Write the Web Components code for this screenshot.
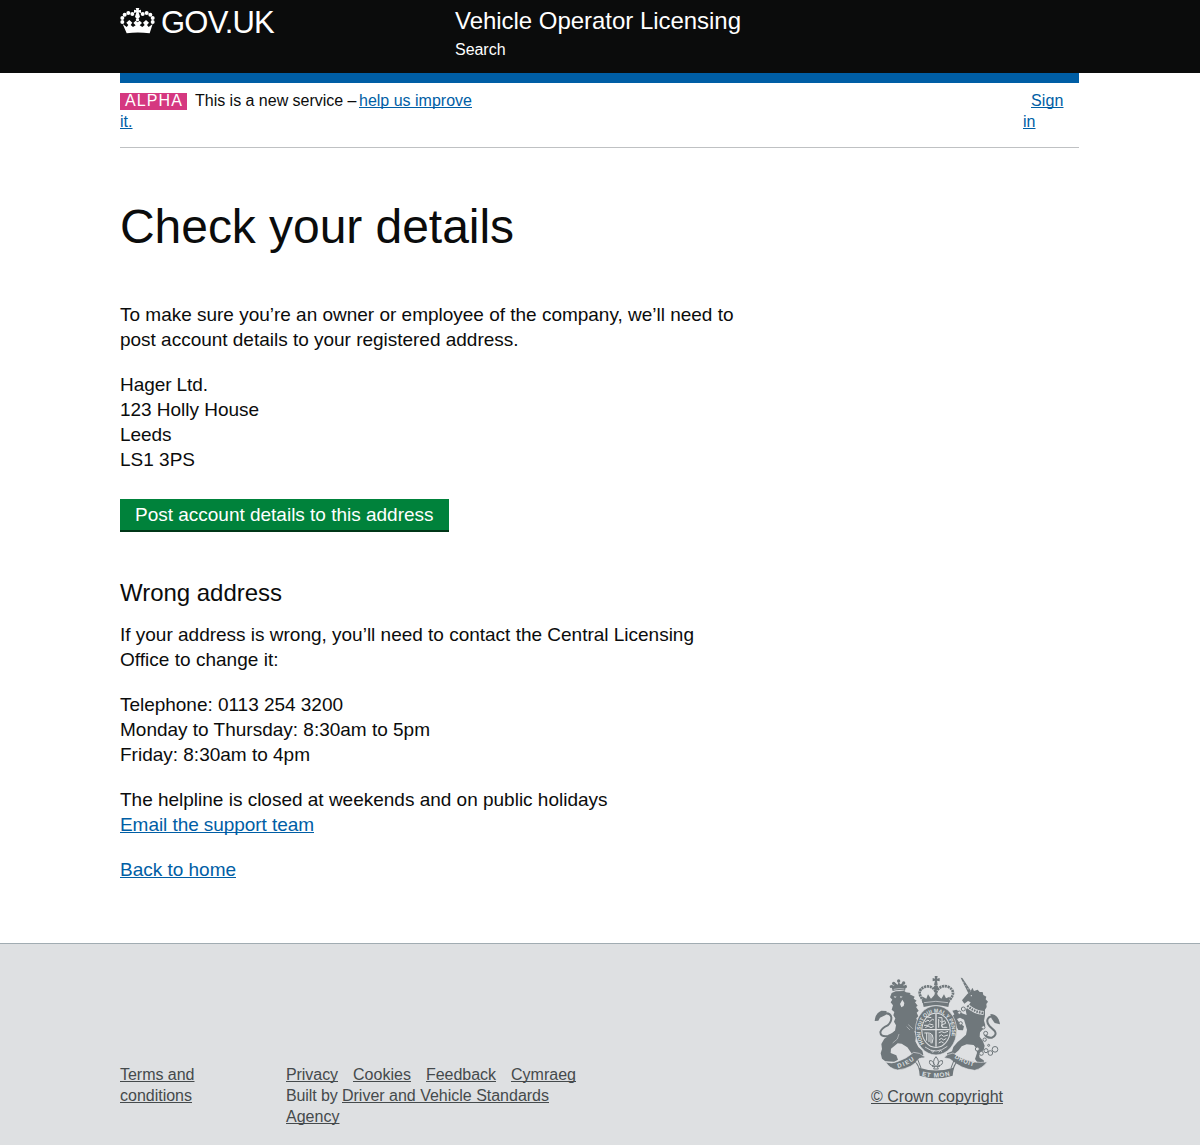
<!DOCTYPE html>
<html lang="en"><head><meta charset="utf-8"><title>Check your details</title>
<style>
html,body{margin:0;background:#fff}
body{font-family:"Liberation Sans",Arial,sans-serif;color:#0b0c0c;height:1145px;overflow:hidden}
</style></head><body>
<licensing-page></licensing-page>
<script>
const define=(name,html,ready)=>customElements.define(name,class extends HTMLElement{
  constructor(){super();this.attachShadow({mode:'open'}).innerHTML=html}
  connectedCallback(){if(ready)ready.call(this)}
});

/* One line of type, tracked so that it sets to the measure given in "w". */
define('type-line','<style>:host{display:block;white-space:pre;height:var(--lh,25px);line-height:var(--lh,25px)}span{display:inline-block}:host([link]) span{text-decoration:underline;text-decoration-thickness:1px;text-underline-offset:1px;text-decoration-skip-ink:none}:host([link]){color:var(--link,#005ea5)}</style><span><slot></slot></span>',function(){
  const s=this.shadowRoot.querySelector('span'),w=+this.getAttribute('w');
  if(!w)return;
  const n=this.textContent.length,d=w-s.getBoundingClientRect().width;
  s.style.letterSpacing=(d/n)+'px';
});

define('crown-mark',`<style>:host{display:block;width:35px;height:27px}svg{display:block}</style>
<svg width="35" height="27" viewBox="0 0 105 81" fill="#fff">
<path d="M47 0h11l-2 7 7-2v10l-7-2 2 9H47l2-9-7 2V5l7 2z"/>
<circle cx="52.500" cy="25" r="7"/><circle cx="52.500" cy="35" r="5"/>
<g><circle cx="37" cy="18" r="6"/><circle cx="25" cy="15" r="6"/><circle cx="14" cy="20" r="6"/><circle cx="7" cy="30" r="6"/><circle cx="7" cy="42" r="6"/><circle cx="68" cy="18" r="6"/><circle cx="80" cy="15" r="6"/><circle cx="91" cy="20" r="6"/><circle cx="98" cy="30" r="6"/><circle cx="98" cy="42" r="6"/></g>
<path d="M8 48l12 9 5-6-6-7 9-8 9 8-5 7 7 6 8-5-7-7 7-7 6 5 6-5 7 7-7 7 8 5 7-6-5-7 9-8 9 8-6 7 5 6 12-9-9 28q-36-5-69 0z"/></svg>`);

define('site-header',`<style>
:host{display:block;background:#0b0c0c;color:#fff;height:73px}
.in{width:960px;margin:0 auto;display:flex}
.brand{width:335px;display:flex;gap:6px;padding-top:8px;box-sizing:border-box}
.brand type-line{font-size:31px;--lh:30px}
.svc{padding-top:6px}
.svc .name{font-size:24px;--lh:30px}.svc .nav{font-size:16px;--lh:20px;margin-top:4px}
</style><div class="in"><div class="brand"><crown-mark></crown-mark><type-line w="113">GOV.UK</type-line></div>
<div class="svc"><type-line class="name" w="286">Vehicle Operator Licensing</type-line><type-line class="nav" w="50.500">Search</type-line></div></div>`);

define('phase-banner',`<style>
:host{display:flex;justify-content:space-between;border-top:10px solid #005ea5;border-bottom:1px solid #bfc1c3;height:64px;font-size:16px;--lh:21px}
.l,.r{padding-top:7px}.row{display:flex}.r{width:56px}.r .a{margin-left:8px}
.tag{background:#d53880;color:#fff;width:62px;height:17px;margin:3px 8px 0 0;padding-left:5px;--lh:16px}
.help{margin-left:2.500px}
</style><div class="l"><div class="row"><div class="tag"><type-line w="58">ALPHA</type-line></div><type-line w="161.500">This is a new service –</type-line><type-line class="help" link w="113">help us improve</type-line></div><type-line link w="12.500">it.</type-line></div>
<div class="r"><type-line class="a" link w="32.500">Sign</type-line><type-line link w="12.500">in</type-line></div>`);

define('green-button',`<style>:host{display:block}button{display:block;font:inherit;font-size:19px;border:0;border-bottom:2px solid #003618;background:#00823b;color:#fff;width:329px;height:33px;padding:0 15px 1px;text-align:left;--lh:25px}</style><button><type-line></type-line></button>`,function(){
  const t=this.shadowRoot.querySelector('type-line');t.textContent=this.textContent;
  const s=t.shadowRoot.querySelector('span');
  s.style.letterSpacing=((298.5-s.getBoundingClientRect().width)/t.textContent.length)+'px';
});

define('details-content',`<style>
:host{display:block;font-size:19px;--lh:25px}
section{margin-top:20px}
.h1{font-size:48px;--lh:50px;padding-top:54px;height:50px}
.first{margin-top:50px}green-button{margin-top:27px}.h2{font-size:24px;--lh:30px;margin-top:46px}
.after{margin-top:14px}
</style>
<type-line class="h1" w="394">Check your details</type-line>
<section class="first"><type-line w="613.500">To make sure you’re an owner or employee of the company, we’ll need to</type-line><type-line w="398.500">post account details to your registered address.</type-line></section>
<section><type-line w="88">Hager Ltd.</type-line><type-line w="139">123 Holly House</type-line><type-line w="51.500">Leeds</type-line><type-line w="75">LS1 3PS</type-line></section>
<green-button>Post account details to this address</green-button>
<type-line class="h2" w="162">Wrong address</type-line>
<section class="after"><type-line w="574">If your address is wrong, you’ll need to contact the Central Licensing</type-line><type-line w="158.500">Office to change it:</type-line></section>
<section><type-line w="223">Telephone: 0113 254 3200</type-line><type-line w="310">Monday to Thursday: 8:30am to 5pm</type-line><type-line w="190">Friday: 8:30am to 4pm</type-line></section>
<section><type-line w="487.500">The helpline is closed at weekends and on public holidays</type-line><type-line link w="194">Email the support team</type-line></section>
<section><type-line link w="116">Back to home</type-line></section>`);

define('royal-arms',`<style>:host{display:block;width:145px;height:120px}svg{display:block}text{font:bold 18px "Liberation Sans",sans-serif;fill:#dee0e2}</style>
<svg width="145" height="120" viewBox="0 0 435 360" fill="#6f777b">
<defs><path id="sc-l" d="M99 309Q130 301 156 279"/><path id="sc-m" d="M170 332Q213 344 262 330"/><path id="sc-r" d="M268 278Q295 297 334 306"/><path id="gart" d="M177 236A47 57 0 1 1 250 236"/></defs>
<!-- lion -->
<path d="M83 78l-5-19 9 3 3-9 8 6 3-8 5 7 8-5 2 9 8-3-4 18q-19-4-37 1z"/><circle cx="101" cy="48" r="5"/><circle cx="86" cy="55" r="5"/><circle cx="116" cy="54" r="5"/><circle cx="78" cy="65" r="4"/><circle cx="122" cy="65" r="4"/>
<path d="M86 73q15-4 32-1" stroke="#dee0e2" stroke-width="2" fill="none"/>
<path d="M80 84L92 79 118 78 123 82 137 84 134 88 149 95 146 101 155 107 150 112 158 122 153 126 161 137 155 143 160 154 154 160 158 172 168 181 175 184 170 202 159 198 148 199 153 212 151 229 160 246 172 257 175 269 166 275 144 275 139 264 127 247 110 236 98 235 78 251 77 264 94 271 99 284 88 290 61 289 51 281 47 265 51 252 49 237 58 221 76 209 90 197 93 181 87 170 91 160 85 151 88 141 80 134 84 121 77 112 82 104 75 97z"/>
<path d="M94 198q-12 12-25 15-23 4-23-12 4-12 22-20 12-9 11-24-3-15-23-11" fill="none" stroke="#6f777b" stroke-width="6"/><path d="M29 168q2-24 20-31l16 1-3 12-17 8-5 9z"/>
<path d="M86 94l9 1-5 4zM105 94l8 1-6 4zM112 104l6 10-2 9-7 4-4-10z" fill="#dee0e2"/>
<path d="M130 179l13 12M125 185l10 10M102 207l-5 15-14 12" fill="none" stroke="#dee0e2" stroke-width="1.500"/>
<!-- unicorn -->
<path d="M287 38l5 1 26 39-8 7z"/><path d="M293 51l5 2M300 61l5 2M306 71l6 1" stroke="#dee0e2" stroke-width="1.500"/>
<path d="M307 87L317 79 322 68 327 78 338 74 344 81 353 81 355 90 364 95 362 103 369 110 364 117 365 126 360 134 360 151 357 167 361 181 354 193 345 202 344 215 353 227 359 242 356 255 342 266 344 278 356 286 359 297 340 297 330 282 336 264 334 250 326 240 305 238 290 244 281 256 269 266 262 275 247 276 246 265 261 259 265 246 278 231 289 222 303 209 306 194 301 177 297 164 285 158 276 162 284 175 297 184 294 196 280 195 275 186 263 168 257 158 268 148 262 137 274 134 289 144 305 150 302 136 309 124 317 112 309 108 298 116 291 106z"/>
<path d="M359 208q8 12 22 10 16-8 8-20l-15-14q-13-15-3-26 11-8 22 3" fill="none" stroke="#6f777b" stroke-width="6"/><path d="M376 147q24 0 29 31l-16-4-9-13z"/>
<circle cx="319" cy="92" r="2" fill="#dee0e2"/>
<path d="M307 122q22 20 49 22" stroke="#dee0e2" stroke-width="12" fill="none"/><path d="M307 122q22 20 49 22" stroke="#6f777b" stroke-width="7" fill="none" stroke-dasharray="5 3"/>
<g fill="#dee0e2" stroke="#6f777b" stroke-width="3"><circle cx="295" cy="132" r="6"/><circle cx="283" cy="143" r="5"/><circle cx="287" cy="175" r="5"/><circle cx="355" cy="187" r="5"/><circle cx="362" cy="205" r="6"/><circle cx="359" cy="224" r="5"/><circle cx="337" cy="252" r="6"/><circle cx="349" cy="265" r="6"/><circle cx="363" cy="257" r="6"/><circle cx="376" cy="264" r="7"/><circle cx="390" cy="253" r="8.500"/><circle cx="371" cy="241" r="3"/></g>
<!-- central crown -->
<path d="M209 33h9l-2 8 8-2v10l-8-2 2 12-5 3-6-3 3-12-7 2V39l7 2z"/><circle cx="213" cy="68" r="7"/>
<path d="M177 108q-28-31 4-43 19-4 29 12l3 5 4-7q13-16 32-10 29 15 2 43" fill="none" stroke="#6f777b" stroke-width="8" stroke-dasharray="6.500 2"/><path d="M213 70v31" stroke="#6f777b" stroke-width="8" stroke-dasharray="6 1.500"/>
<path d="M171 113l2-18 11 6 5-13 9 13 7-7 8-10 8 10 8 7 8-13 6 12 11-5-1 18z"/><path d="M172 108q41-10 82 0l-4 18q-37-11-74 0z"/>
<path d="M177 113q35-8 72 0" fill="none" stroke="#dee0e2" stroke-width="2"/>
<!-- garter and shield -->
<ellipse cx="213" cy="196" rx="62" ry="74" stroke="#dee0e2" stroke-width="2"/><ellipse cx="213" cy="196" rx="44" ry="53" fill="#dee0e2"/><ellipse cx="213" cy="196" rx="41" ry="50"/>
<path d="M213 146v99M172 194h82" stroke="#dee0e2" stroke-width="4"/>
<g stroke="#dee0e2" stroke-width="3" fill="none"><path d="M180 171l9-6 5 5 8-7 5 2M177 181h12l5-4 11 3M181 188l8-5 9 5 8-4M187 156l12 2M220 158h11v29h16M221 188v-26M225 167l5 5 9-5 3 8-13 5 3 6M178 204q19-2 24 6t-1 25M185 204v23M192 206v25M198 208v27M221 203l9-3 8 3 11-4M222 214l7-5 7 5 13-4M222 225l7-5 7 5 8-5M221 234l8-4 7 4"/></g>
<text style="font-size:17px"><textPath href="#gart" textLength="215" lengthAdjust="spacingAndGlyphs">HONI SOIT QUI MAL Y PENSE</textPath></text>
<path d="M180 246q33 25 67-2M199 256l4 6 6-5M221 262l5-6 5 4" stroke="#dee0e2" stroke-width="2.500" fill="none"/>
<!-- motto ribbon -->
<g stroke="#dee0e2" stroke-width="2"><path d="M62 291q19 6 34-1 28-8 50-28 19 0 32 13l-17 6q-16 28-63 34-25-4-36-24z"/><path d="M367 290q-19 5-42 0-36-7-61-26-17 2-27 14l18 4q33 30 74 34 24-6 38-26z"/></g>
<path d="M178 276q-20-1-20 7l10 26M248 276q20-1 20 7l-10 26" fill="none" stroke="#6f777b" stroke-width="3"/>
<path d="M147 288q11 4 16 20 50 17 101 0 5-16 16-20-15 15-17 44-48 16-99 0-2-32-17-44z"/>
<text><textPath href="#sc-l" textLength="55">DIEU</textPath></text><text style="font-size:19px"><textPath href="#sc-m" textLength="86">ET MON</textPath></text><text><textPath href="#sc-r" textLength="63">DROIT</textPath></text>
<path d="M213 275q-13 15-3 27l-4 10h14l-4-10q10-12-3-27zM207 303q-17-3-13-16 10-2 13 12M219 303q17-3 13-16-10-2-13 12M201 304h24" stroke="#6f777b" fill="none" stroke-width="3"/>
</svg>`);

define('site-footer',`<style>
:host{display:block;margin-top:61px;height:201px;background:#dee0e2;border-top:1px solid #a1acb2;color:#454a4c;font-size:16px;--lh:21px;--link:#454a4c}
.in{width:960px;margin:0 auto;display:flex;align-items:flex-start}
.terms{width:166px;padding-top:120px}.links{width:579px;padding-top:120px}.row{display:flex;gap:15px}.built{gap:0}
.crown{padding-top:21px}.copy{margin-left:6px;margin-top:1px}
</style><div class="in"><div class="terms"><type-line link w="74.500">Terms and</type-line><type-line link w="72">conditions</type-line></div>
<div class="links"><div class="row"><type-line link w="52">Privacy</type-line><type-line link w="58">Cookies</type-line><type-line link w="70">Feedback</type-line><type-line link w="65">Cymraeg</type-line></div><div class="row built"><type-line w="56">Built by </type-line><type-line link w="207">Driver and Vehicle Standards</type-line></div><type-line link w="53.500">Agency</type-line></div>
<div class="crown"><royal-arms></royal-arms><type-line class="copy" link w="132">© Crown copyright</type-line></div></div>`);

define('licensing-page',`<style>:host{display:block}main{width:959px;margin-left:120px}</style><site-header></site-header><main><phase-banner></phase-banner><details-content></details-content></main><site-footer></site-footer>`);
</script></body></html>
